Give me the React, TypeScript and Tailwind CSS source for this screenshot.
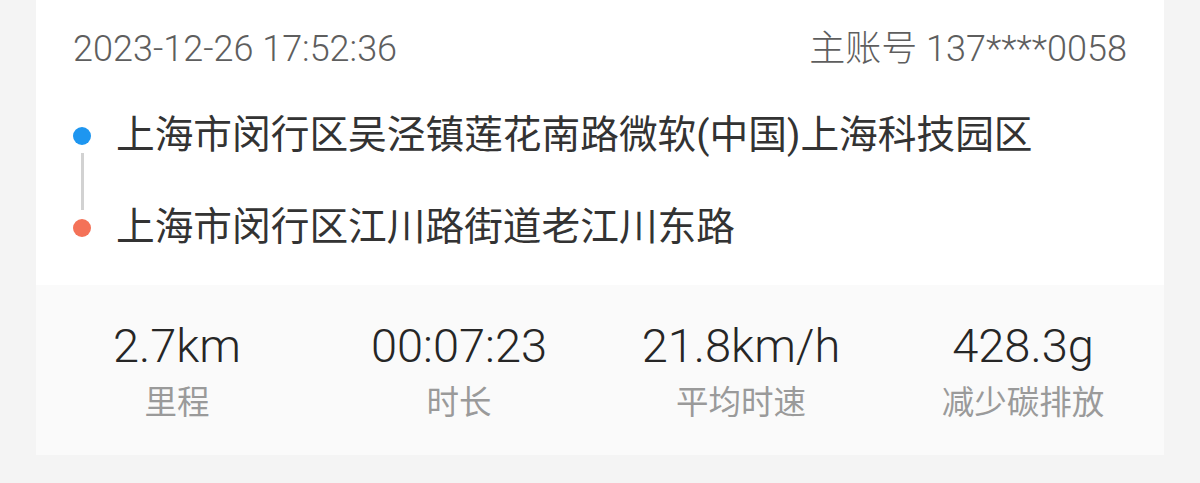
import React from "react";

const stats = [
  { value: "2.7km", label: "里程" },
  { value: "00:07:23", label: "时长" },
  { value: "21.8km/h", label: "平均时速" },
  { value: "428.3g", label: "减少碳排放" },
];

export default function App() {
  return (
    <div
      className="w-[1200px] h-[483px] bg-[#f4f4f4] overflow-hidden"
      style={{ fontFamily: "Roboto, 'Noto Sans CJK SC', sans-serif" }}
    >
      <div className="mx-[36px] w-[1128px] bg-white">
        <div className="h-[285px] px-[37px]">
          <div className="pt-[19px] h-[79px] flex items-center justify-between text-[36px] leading-none font-light text-[#5e5e5e]">
            <span>2023-12-26 17:52:36</span>
            <span>主账号 137****0058</span>
          </div>
          <div className="mt-[33px] flex">
            <div className="w-[18px] flex flex-col items-center pt-[15px]">
              <div className="w-[18px] h-[18px] rounded-full bg-[#1e96f0]" />
              <div className="mt-[8px] w-[3px] h-[57px] bg-[#d2d2d2]" />
              <div className="mt-[9px] w-[18px] h-[18px] rounded-full bg-[#f47258]" />
            </div>
            <div className="ml-[25px] flex flex-col gap-[46px] text-[38.7px] leading-none text-[#333333]">
              <div className="h-[46px] flex items-center">上海市闵行区吴泾镇莲花南路微软(中国)上海科技园区</div>
              <div className="h-[46px] flex items-center">上海市闵行区江川路街道老江川东路</div>
            </div>
          </div>
        </div>
        <div className="h-[170px] bg-[#fafafa] flex pt-[32px]">
          {stats.map((s) => (
            <div key={s.label} className="flex-1 flex flex-col items-center">
              <div className="h-[56px] flex items-center text-[47px] leading-none font-light text-[#262626]">
                {s.value}
              </div>
              <div className="mt-[10px] h-[40px] flex items-center text-[32.5px] leading-none text-[#9a9a9a]">
                {s.label}
              </div>
            </div>
          ))}
        </div>
      </div>
    </div>
  );
}
